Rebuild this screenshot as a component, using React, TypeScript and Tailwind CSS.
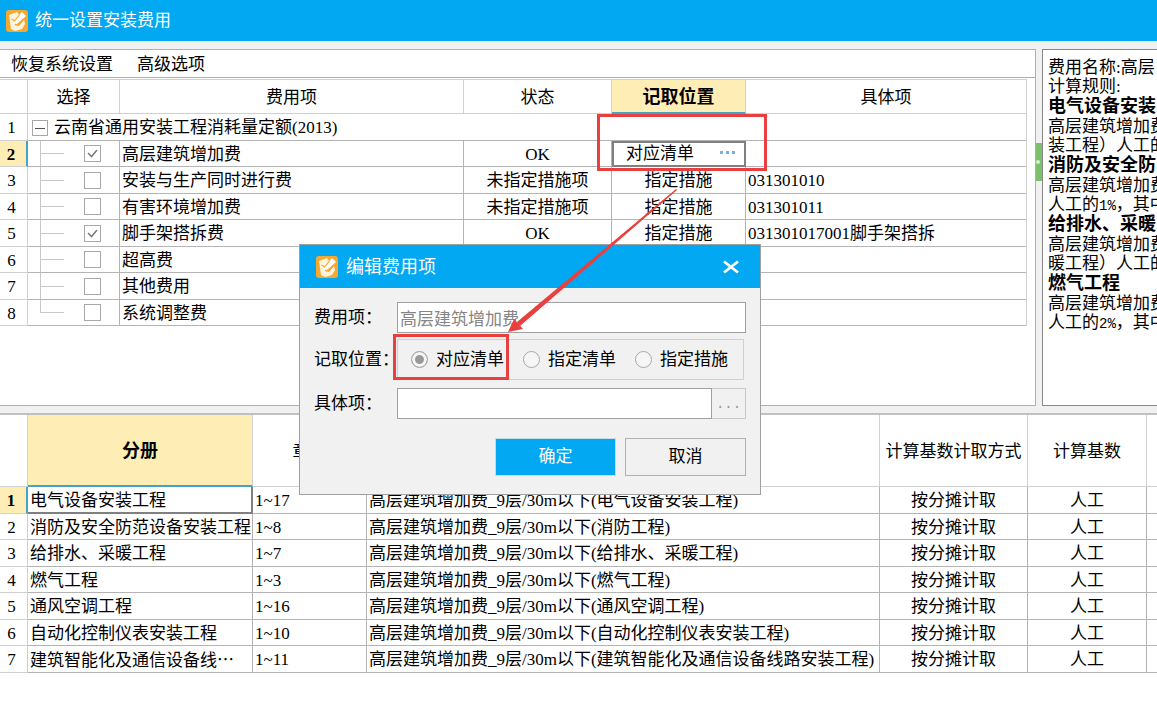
import { useState, type ReactNode } from "react";

interface FeeRow {
  name: string;
  checked: boolean;
  status?: string;
  position?: string;
  detail?: string;
}

interface VolumeRow {
  name: ReactNode;
  chapters: string;
  fee: string;
}

const FEES: FeeRow[] = [
  { name: "高层建筑增加费", checked: true, status: "OK", position: "对应清单" },
  { name: "安装与生产同时进行费", checked: false, status: "未指定措施项", position: "指定措施", detail: "031301010" },
  { name: "有害环境增加费", checked: false, status: "未指定措施项", position: "指定措施", detail: "031301011" },
  { name: "脚手架搭拆费", checked: true, status: "OK", position: "指定措施", detail: "031301017001脚手架搭拆" },
  { name: "超高费", checked: false },
  { name: "其他费用", checked: false },
  { name: "系统调整费", checked: false },
];

const VOLUMES: VolumeRow[] = [
  { name: "电气设备安装工程", chapters: "1~17", fee: "高层建筑增加费_9层/30m以下(电气设备安装工程)" },
  { name: "消防及安全防范设备安装工程", chapters: "1~8", fee: "高层建筑增加费_9层/30m以下(消防工程)" },
  { name: "给排水、采暖工程", chapters: "1~7", fee: "高层建筑增加费_9层/30m以下(给排水、采暖工程)" },
  { name: "燃气工程", chapters: "1~3", fee: "高层建筑增加费_9层/30m以下(燃气工程)" },
  { name: "通风空调工程", chapters: "1~16", fee: "高层建筑增加费_9层/30m以下(通风空调工程)" },
  { name: "自动化控制仪表安装工程", chapters: "1~10", fee: "高层建筑增加费_9层/30m以下(自动化控制仪表安装工程)" },
  {
    name: (
      <>
        建筑智能化及通信设备线
        <span className="font-['Noto_Sans_CJK_SC',sans-serif]">…</span>
      </>
    ),
    chapters: "1~11",
    fee: "高层建筑增加费_9层/30m以下(建筑智能化及通信设备线路安装工程)",
  },
];

const RULES: { title: string; intro: string; before: string; rate?: string; after?: string }[] = [
  { title: "电气设备安装", intro: "高层建筑增加费", before: "装工程）人工的" },
  { title: "消防及安全防", intro: "高层建筑增加费", before: "人工的", rate: "1%", after: "，其中" },
  { title: "给排水、采暖", intro: "高层建筑增加费", before: "暖工程）人工的" },
  { title: "燃气工程", intro: "高层建筑增加费", before: "人工的", rate: "2%", after: "，其中" },
];

const POSITIONS = ["对应清单", "指定清单", "指定措施"];

const headCell = "border-r border-b border-[#d0d0d0] p-0 pt-0.5 font-normal last:border-r-0";
const headActive = "border-r border-b-2 border-r-[#d0d0d0] border-b-[#46a3c8] bg-[#feedb5] p-0 pt-0.5 text-[18px] font-bold";
const cell = "overflow-hidden border-r border-b border-[#b4b4b4] p-0";
const rowHeight = "odd:h-[27px] even:h-[26px]";

function AppLogo() {
  return (
    <svg viewBox="0 0 22 22" className="h-[22px] w-[22px] shrink-0" aria-hidden="true">
      <rect width="22" height="22" rx="3" fill="#f7a82f" />
      <path d="M3 5l8-3 2 3-4 5-1 5 5 1 5-6 1 4-3 5-7 2-4-2-1-7z" fill="#fff4df" />
      <path d="M16 2l4 4-9 8-4 1 1-4z" fill="#fff" />
      <path d="M5.500 9l3 2 5-6M9 14.500l3.500-.5 5-5" fill="none" stroke="#f7a82f" strokeWidth="1.100" />
    </svg>
  );
}

function RowNumber({ value, active }: { value: number; active?: boolean }) {
  if (active) {
    return (
      <th scope="row" className="border-r-2 border-b border-r-[#46a3c8] border-b-[#d0d0d0] bg-[#feedb5] p-0 pt-0.5 pr-1 font-bold">
        {value}
      </th>
    );
  }
  return (
    <th scope="row" className="border-r border-b border-[#d0d0d0] p-0 pt-0.5 pr-1 font-normal">
      {value}
    </th>
  );
}

function TreeCheckbox({ label, checked, last, onChange }: {
  label: string;
  checked: boolean;
  last: boolean;
  onChange: () => void;
}) {
  return (
    <div className="flex h-full items-center pl-3">
      <div className="flex w-6 flex-col self-stretch">
        <span className="flex-1 border-b border-l border-[#c8c8c8]" />
        <span className={last ? "flex-1" : "flex-1 border-l border-[#c8c8c8]"} />
      </div>
      <span className="ml-5 grid">
        <input
          type="checkbox"
          aria-label={label}
          checked={checked}
          onChange={onChange}
          className="col-start-1 row-start-1 h-[17px] w-[17px] appearance-none border border-[#a8a8a8] bg-white"
        />
        {checked && (
          <svg viewBox="0 0 17 17" className="pointer-events-none col-start-1 row-start-1 h-[17px] w-[17px]">
            <path d="M4 8l3.500 3.500L13 5" fill="none" stroke="#7c7c7c" strokeWidth="1.600" />
          </svg>
        )}
      </span>
    </div>
  );
}

function FeeTable() {
  const [checks, setChecks] = useState(FEES.map((fee) => fee.checked));

  const toggle = (index: number) => {
    setChecks((prev) => prev.map((value, i) => (i === index ? !value : value)));
  };

  return (
    <table className="w-full table-fixed border-separate border-spacing-0 border-t border-r border-[#d0d0d0] whitespace-nowrap">
      <colgroup>
        <col className="w-[28px]" />
        <col className="w-[92px]" />
        <col className="w-[344px]" />
        <col className="w-[148px]" />
        <col className="w-[134px]" />
        <col />
      </colgroup>
      <thead>
        <tr className="h-[34px]">
          <th className={headCell} />
          <th className={headCell}>选择</th>
          <th className={headCell}>费用项</th>
          <th className={headCell}>状态</th>
          <th className={headActive}>记取位置</th>
          <th className={headCell}>具体项</th>
        </tr>
      </thead>
      <tbody>
        <tr className={rowHeight}>
          <RowNumber value={1} />
          <td colSpan={5} className={`${cell} border-r-0 pt-0.5`}>
            <div className="flex items-center gap-1.5 pl-1">
              <button
                type="button"
                aria-label="折叠"
                className="flex h-4 w-4 items-center justify-center border border-[#a8a8a8] bg-white"
              >
                <span className="h-px w-2.5 bg-[#555]" />
              </button>
              云南省通用安装工程消耗量定额(2013)
            </div>
          </td>
        </tr>
        {FEES.map((fee, i) => (
          <tr key={fee.name} className={rowHeight}>
            <RowNumber value={i + 2} active={i === 0} />
            <td className={`${cell} h-px`}>
              <TreeCheckbox
                label={fee.name}
                checked={checks[i]}
                last={i === FEES.length - 1}
                onChange={() => toggle(i)}
              />
            </td>
            <td className={`${cell} pt-0.5 pl-0.5`}>{fee.name}</td>
            <td className={`${cell} pt-0.5 text-center`}>{fee.status}</td>
            {i === 0 ? (
              <td className="border-2 border-[#808080] p-0">
                <div className="flex items-center justify-between pr-2 pl-3">
                  {fee.position}
                  <button type="button" aria-label="选择记取位置" className="flex gap-[3px] p-px pb-1">
                    <span className="h-[3px] w-[3px] bg-[#7fb0dc]" />
                    <span className="h-[3px] w-[3px] bg-[#7fb0dc]" />
                    <span className="h-[3px] w-[3px] bg-[#7fb0dc]" />
                  </button>
                </div>
              </td>
            ) : (
              <td className={`${cell} pt-0.5 text-center`}>{fee.position}</td>
            )}
            <td className={`${cell} border-r-0 pt-0.5 pl-0.5`}>{fee.detail}</td>
          </tr>
        ))}
      </tbody>
    </table>
  );
}

function VolumeTable() {
  return (
    <table className="w-full table-fixed border-separate border-spacing-0 whitespace-nowrap">
      <colgroup>
        <col className="w-[28px]" />
        <col className="w-[225px]" />
        <col className="w-[114px]" />
        <col className="w-[513px]" />
        <col className="w-[148px]" />
        <col className="w-[119px]" />
        <col />
      </colgroup>
      <thead>
        <tr className="h-[72px]">
          <th className={headCell} />
          <th className={headActive}>分册</th>
          <th className={headCell}>章节</th>
          <th className={headCell} />
          <th className={headCell}>计算基数计取方式</th>
          <th className={headCell}>计算基数</th>
          <th className={headCell} />
        </tr>
      </thead>
      <tbody>
        {VOLUMES.map((volume, i) => (
          <tr key={volume.fee} className={rowHeight}>
            <RowNumber value={i + 1} active={i === 0} />
            {i === 0 ? (
              <td className="overflow-hidden border-r-2 border-b-2 border-[#808080] p-0 pt-0.5 pl-0.5">{volume.name}</td>
            ) : (
              <td className={`${cell} pt-0.5 pl-0.5`}>{volume.name}</td>
            )}
            <td className={`${cell} pt-0.5 pl-0.5`}>{volume.chapters}</td>
            <td className={`${cell} pt-0.5 pl-0.5`}>{volume.fee}</td>
            <td className={`${cell} pt-0.5 text-center`}>按分摊计取</td>
            <td className={`${cell} pt-0.5 text-center`}>人工</td>
            <td className={`${cell} border-r-0`} />
          </tr>
        ))}
      </tbody>
    </table>
  );
}

function EditDialog() {
  const [position, setPosition] = useState(POSITIONS[0]);

  return (
    <div
      role="dialog"
      aria-labelledby="edit-title"
      className="absolute top-[244px] left-[299px] w-[462px] border border-[#a0a0a0] bg-[#f1f1f1]"
    >
      <header className="flex h-[43px] items-center bg-[#02a8f1] pr-5 pl-4 text-white">
        <AppLogo />
        <h2 id="edit-title" className="ml-2 flex-1 text-[18px]">编辑费用项</h2>
        <button type="button" aria-label="关闭">
          <svg viewBox="0 0 18 14" className="h-[14px] w-[18px]">
            <path d="M2 1.500 16 12.500M16 1.500 2 12.500" fill="none" stroke="#fff" strokeWidth="2.800" />
          </svg>
        </button>
      </header>
      <form className="px-3.5 pt-[14px] pb-[18px]" onSubmit={(e) => e.preventDefault()}>
        <div className="flex items-center">
          <label htmlFor="fee-name" className="w-[83px]">费用项：</label>
          <input
            id="fee-name"
            disabled
            defaultValue="高层建筑增加费"
            className="h-[31px] min-w-0 flex-1 border border-[#a0a0a0] bg-white px-0.5 text-[#858585]"
          />
        </div>
        <div className="mt-[6px] flex items-center" role="radiogroup" aria-labelledby="position-label">
          <span id="position-label" className="w-[83px] whitespace-nowrap">记取位置：</span>
          <div className="mr-0.5 flex h-[41px] flex-1 items-center gap-[19px] border border-[#d0d0d0] pl-[13px]">
            {POSITIONS.map((item) => (
              <label key={item} className="flex items-center gap-2">
                <input
                  type="radio"
                  name="position"
                  checked={position === item}
                  onChange={() => setPosition(item)}
                  className="h-[17px] w-[17px] appearance-none rounded-full border border-[#a8a8a8] bg-[#f6f6f6] checked:bg-[#999] checked:shadow-[inset_0_0_0_3px_#f6f6f6]"
                />
                {item}
              </label>
            ))}
          </div>
        </div>
        <div className="mt-2 flex items-center">
          <label htmlFor="fee-detail" className="w-[83px]">具体项：</label>
          <input id="fee-detail" className="h-[31px] min-w-0 flex-1 border border-[#a0a0a0] bg-white px-0.5" />
          <button type="button" className="h-[31px] w-[34px] border border-l-0 border-[#c8c8c8] font-['Liberation_Mono',monospace] text-sm text-[#999]">
            ...
          </button>
        </div>
        <div className="mt-[19px] flex justify-end gap-[9px]">
          <button type="submit" className="h-[38px] w-[121px] border border-[#c4dcea] bg-[#02a8f1] text-white">确定</button>
          <button type="button" className="h-[38px] w-[121px] border border-[#b0b0b0]">取消</button>
        </div>
      </form>
    </div>
  );
}

export default function App() {
  return (
    <div className="relative min-h-screen overflow-hidden bg-white font-['Liberation_Serif','Noto_Sans_CJK_SC',serif] text-[17px] leading-[22px] text-black">
      <header className="flex h-[41px] items-center gap-[7px] bg-[#02a8f1] pl-1.5 text-white">
        <AppLogo />
        <h1>统一设置安装费用</h1>
      </header>

      <main>
        <div className="flex bg-[#f1f1f1] pt-2">
          <section className="h-[357px] min-w-0 flex-1 border border-l-0 border-[#b0b0b0] bg-white">
            <nav className="mb-px flex h-[28px] items-center gap-6 border-b border-[#b0b0b0] pt-0.5 pl-[11px]">
              <button type="button">恢复系统设置</button>
              <button type="button">高级选项</button>
            </nav>
            <div className="pr-2">
              <FeeTable />
            </div>
          </section>

          <div className="w-1.5 pt-[94px]">
            <button type="button" aria-label="收起" className="flex h-[38px] w-1.5 items-center bg-[#7cc06c]">
              <span className="h-1 w-1 rounded-full bg-[#d8eed2]" />
            </button>
          </div>

          <aside className="w-[115px] overflow-hidden border border-r-0 border-[#888] bg-white pt-2 pl-[5px] leading-[19px] whitespace-nowrap">
            <p>费用名称:高层</p>
            <p>计算规则:</p>
            {RULES.map((rule) => (
              <section key={rule.title}>
                <h3 className="text-[18px] leading-[21px] font-bold">{rule.title}</h3>
                <p>{rule.intro}</p>
                <p>
                  {rule.before}
                  {rule.rate && <span className="font-['Liberation_Mono',monospace] text-sm leading-none">{rule.rate}</span>}
                  {rule.after}
                </p>
              </section>
            ))}
          </aside>
        </div>

        <div className="h-[9px] border-b-2 border-[#c0c0c0] bg-[#f1f1f1]" />
        <VolumeTable />
      </main>

      <EditDialog />

      {/* Callouts linking the grid cell to the dialog option */}
      <div className="pointer-events-none absolute top-[114px] left-[597px] h-[57px] w-[170px] border-3 border-[#e8403f]" />
      <div className="pointer-events-none absolute top-[334px] left-[393px] h-[46px] w-[116px] border-3 border-[#e8403f]" />
      <svg viewBox="0 0 170 144" className="pointer-events-none absolute top-[189px] left-[508px] h-[144px] w-[170px]">
        <path d="M168 0 9 133l3 4L169 1zM0 143l6-13 9 10z" fill="#e8403f" />
      </svg>
    </div>
  );
}
